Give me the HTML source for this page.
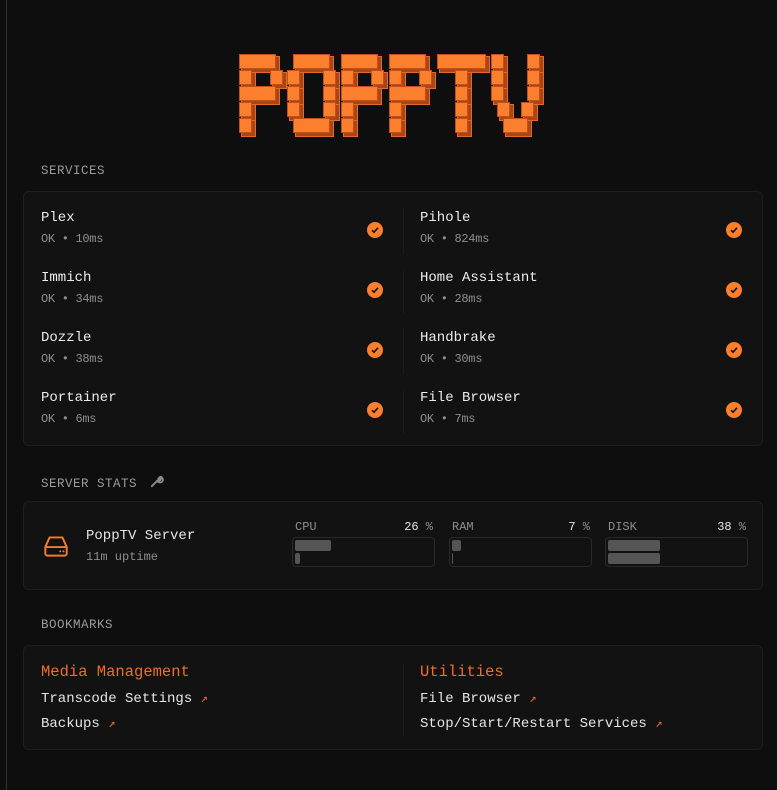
<!DOCTYPE html>
<html><head><meta charset="utf-8"><style>
*{box-sizing:border-box;margin:0;padding:0}
body{width:777px;height:790px;background:#0e0e0e;font-family:"Liberation Mono",monospace;color:#e6e6e6;position:relative;overflow:hidden}
.vline{position:absolute;left:6px;top:0;width:1px;height:790px;background:#333}
.b{position:absolute;background:#fb7f2c;border:1px solid #c2501a;height:15px;box-shadow:3px 3px 0 0 #a8461a,3px 3px 0 1px #e06a26}
.lbl{position:absolute;left:41px;font-size:12.5px;color:#9a9a9a;letter-spacing:.5px}
.card{position:absolute;left:23px;width:740px;background:#121212;border:1px solid #1f1f1f;border-radius:6px}
.svc{position:absolute;width:340px}
.svc .n{font-size:14px;color:#ececec}
.svc .s{font-size:12px;color:#8e8e8e;margin-top:6px;letter-spacing:-.3px}
.chk{position:absolute;width:16px;height:16px;border-radius:50%;background:#fb7f2c;top:12px}
.chk svg{position:absolute;left:3px;top:3px}
.sep{position:absolute;left:379px;width:1px;background:#1c1c1c}
.stat{position:absolute;top:18px;width:143px}
.stat .h{display:flex;justify-content:space-between;font-size:12px;color:#8e8e8e;padding:0 2px 0 3px}
.stat .h b{font-weight:normal;color:#e6e6e6}
.bar{margin-top:3px;height:30px;border:1px solid #2a2a2a;border-radius:4px;position:relative}
.bar i{position:absolute;left:2px;background:#555;border-radius:2px;height:11px}
.bk{position:absolute;font-size:14px}
.bk .t{color:#f26b2a;font-size:15.5px;height:28px!important}
.bk div{height:25px}
.ar{color:#f26b2a;font-size:12px}
</style></head><body>
<div class="vline"></div>
<div class="b" style="left:239px;top:54px;width:37px"></div>
<div class="b" style="left:239px;top:70px;width:13px"></div><div class="b" style="left:270px;top:70px;width:13px"></div>
<div class="b" style="left:239px;top:86px;width:37px"></div>
<div class="b" style="left:239px;top:102px;width:13px"></div><div class="b" style="left:239px;top:118px;width:13px"></div>
<div class="b" style="left:293px;top:54px;width:37px"></div>
<div class="b" style="left:287px;top:70px;width:13px"></div><div class="b" style="left:323px;top:70px;width:13px"></div>
<div class="b" style="left:287px;top:86px;width:13px"></div><div class="b" style="left:323px;top:86px;width:13px"></div>
<div class="b" style="left:287px;top:102px;width:13px"></div><div class="b" style="left:323px;top:102px;width:13px"></div>
<div class="b" style="left:293px;top:118px;width:37px"></div>
<div class="b" style="left:341px;top:54px;width:37px"></div>
<div class="b" style="left:341px;top:70px;width:13px"></div><div class="b" style="left:371px;top:70px;width:13px"></div>
<div class="b" style="left:341px;top:86px;width:37px"></div>
<div class="b" style="left:341px;top:102px;width:13px"></div><div class="b" style="left:341px;top:118px;width:13px"></div>
<div class="b" style="left:389px;top:54px;width:37px"></div>
<div class="b" style="left:389px;top:70px;width:13px"></div><div class="b" style="left:419px;top:70px;width:13px"></div>
<div class="b" style="left:389px;top:86px;width:37px"></div>
<div class="b" style="left:389px;top:102px;width:13px"></div><div class="b" style="left:389px;top:118px;width:13px"></div>
<div class="b" style="left:437px;top:54px;width:49px"></div>
<div class="b" style="left:455px;top:70px;width:13px"></div><div class="b" style="left:455px;top:86px;width:13px"></div>
<div class="b" style="left:455px;top:102px;width:13px"></div><div class="b" style="left:455px;top:118px;width:13px"></div>
<div class="b" style="left:491px;top:54px;width:13px"></div><div class="b" style="left:527px;top:54px;width:13px"></div>
<div class="b" style="left:491px;top:70px;width:13px"></div><div class="b" style="left:527px;top:70px;width:13px"></div>
<div class="b" style="left:491px;top:86px;width:13px"></div><div class="b" style="left:527px;top:86px;width:13px"></div>
<div class="b" style="left:497px;top:102px;width:13px"></div><div class="b" style="left:521px;top:102px;width:13px"></div>
<div class="b" style="left:503px;top:118px;width:25px"></div>

<div class="lbl" style="top:164px">SERVICES</div>
<div class="card" style="top:191px;height:255px">
 <div class="sep" style="top:17px;height:45px"></div><div class="sep" style="top:77px;height:45px"></div>
 <div class="sep" style="top:137px;height:45px"></div><div class="sep" style="top:197px;height:45px"></div>
</div>
<div class="svc" style="left:41px;top:210px"><div class="n">Plex</div><div class="s">OK • 10ms</div><div class="chk" style="left:326px"><svg width="10" height="10" viewBox="0 0 10 10"><path d="M2 5.2l2 2 4-4.4" stroke="#111" stroke-width="1.6" fill="none"/></svg></div></div>
<div class="svc" style="left:420px;top:210px"><div class="n">Pihole</div><div class="s">OK • 824ms</div><div class="chk" style="left:306px"><svg width="10" height="10" viewBox="0 0 10 10"><path d="M2 5.2l2 2 4-4.4" stroke="#111" stroke-width="1.6" fill="none"/></svg></div></div>
<div class="svc" style="left:41px;top:270px"><div class="n">Immich</div><div class="s">OK • 34ms</div><div class="chk" style="left:326px"><svg width="10" height="10" viewBox="0 0 10 10"><path d="M2 5.2l2 2 4-4.4" stroke="#111" stroke-width="1.6" fill="none"/></svg></div></div>
<div class="svc" style="left:420px;top:270px"><div class="n">Home Assistant</div><div class="s">OK • 28ms</div><div class="chk" style="left:306px"><svg width="10" height="10" viewBox="0 0 10 10"><path d="M2 5.2l2 2 4-4.4" stroke="#111" stroke-width="1.6" fill="none"/></svg></div></div>
<div class="svc" style="left:41px;top:330px"><div class="n">Dozzle</div><div class="s">OK • 38ms</div><div class="chk" style="left:326px"><svg width="10" height="10" viewBox="0 0 10 10"><path d="M2 5.2l2 2 4-4.4" stroke="#111" stroke-width="1.6" fill="none"/></svg></div></div>
<div class="svc" style="left:420px;top:330px"><div class="n">Handbrake</div><div class="s">OK • 30ms</div><div class="chk" style="left:306px"><svg width="10" height="10" viewBox="0 0 10 10"><path d="M2 5.2l2 2 4-4.4" stroke="#111" stroke-width="1.6" fill="none"/></svg></div></div>
<div class="svc" style="left:41px;top:390px"><div class="n">Portainer</div><div class="s">OK • 6ms</div><div class="chk" style="left:326px"><svg width="10" height="10" viewBox="0 0 10 10"><path d="M2 5.2l2 2 4-4.4" stroke="#111" stroke-width="1.6" fill="none"/></svg></div></div>
<div class="svc" style="left:420px;top:390px"><div class="n">File Browser</div><div class="s">OK • 7ms</div><div class="chk" style="left:306px"><svg width="10" height="10" viewBox="0 0 10 10"><path d="M2 5.2l2 2 4-4.4" stroke="#111" stroke-width="1.6" fill="none"/></svg></div></div>

<div class="lbl" style="top:474px">SERVER STATS <svg width="15" height="15" viewBox="0 0 16 16" style="vertical-align:-2px;margin-left:4px"><path d="M3 13L9 7M9 7a3 3 0 1 0 3-4l-2 2v1h1l2-2a3 3 0 0 1-4 3" stroke="#8a8a8a" stroke-width="2" fill="none" stroke-linecap="round"/></svg></div>
<div class="card" style="top:501px;height:89px">
 <svg style="position:absolute;left:17px;top:29px" width="30" height="30" viewBox="0 0 28 28"><path d="M4 15l4-9h12l4 9v6a2 2 0 0 1-2 2H6a2 2 0 0 1-2-2z M4 15h20" stroke="#f47a2c" stroke-width="1.8" fill="none" stroke-linejoin="round"/><circle cx="18" cy="19" r=".9" fill="#f47a2c"/><circle cx="21" cy="19" r=".9" fill="#f47a2c"/></svg>
 <div style="position:absolute;left:62px;top:26px;font-size:14px">PoppTV Server</div>
 <div style="position:absolute;left:62px;top:48px;font-size:12px;color:#8e8e8e">11m uptime</div>
 <div class="stat" style="left:268px"><div class="h"><span>CPU</span><span><b>26</b> %</span></div><div class="bar"><i style="top:2px;width:36px"></i><i style="top:15px;width:5px"></i></div></div>
 <div class="stat" style="left:425px"><div class="h"><span>RAM</span><span><b>7</b> %</span></div><div class="bar"><i style="top:2px;width:9px"></i><i style="top:15px;width:1px"></i></div></div>
 <div class="stat" style="left:581px"><div class="h"><span>DISK</span><span><b>38</b> %</span></div><div class="bar"><i style="top:2px;width:52px"></i><i style="top:15px;width:52px"></i></div></div>
</div>

<div class="lbl" style="top:618px">BOOKMARKS</div>
<div class="card" style="top:645px;height:105px"><div class="sep" style="top:17px;height:72px"></div></div>
<div class="bk" style="left:41px;top:663px"><div class="t">Media Management</div><div>Transcode Settings <span class="ar">↗</span></div><div>Backups <span class="ar">↗</span></div></div>
<div class="bk" style="left:420px;top:663px"><div class="t">Utilities</div><div>File Browser <span class="ar">↗</span></div><div>Stop/Start/Restart Services <span class="ar">↗</span></div></div>
</body></html>
